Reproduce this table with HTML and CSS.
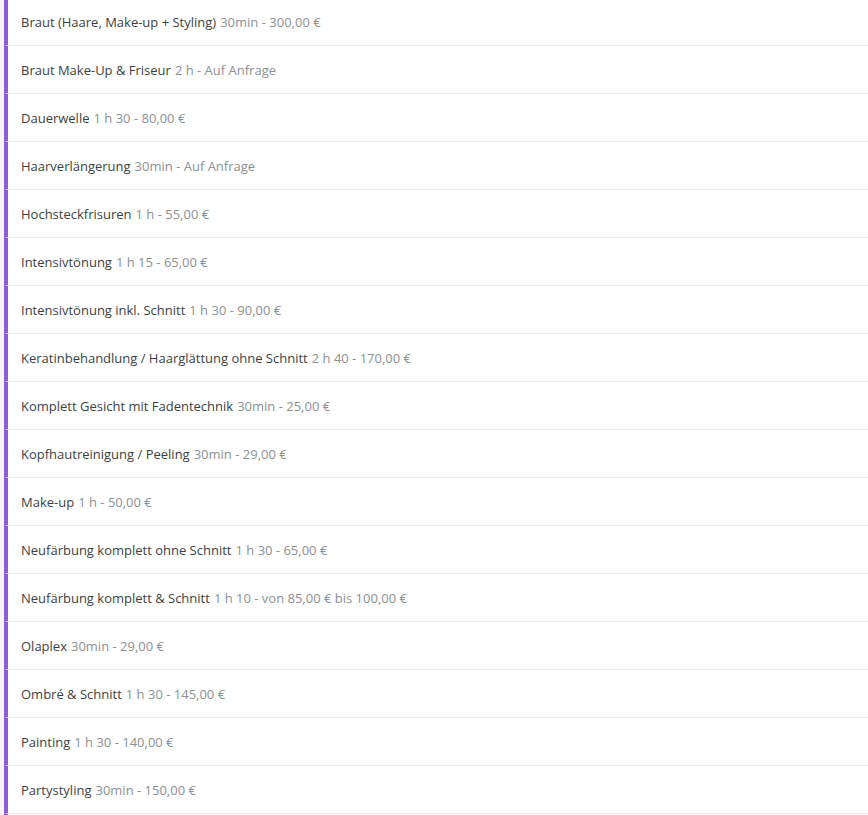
FILE: index.html
```html
<!DOCTYPE html>
<html lang="de">
  <head>
    <meta charset="UTF-8" />
    <meta name="viewport" content="width=device-width, initial-scale=1.0" />
    <title>Leistungen</title>
    <link rel="stylesheet" href="styles.css">
  </head>
  <body>
    <main class="services">
      <ul class="service-list">
        <li class="service">Braut (Haare, Make-up + Styling) <span class="meta">30min - 300,00 €</span></li>
        <li class="service">Braut Make-Up &amp; Friseur <span class="meta">2 h - Auf Anfrage</span></li>
        <li class="service">Dauerwelle <span class="meta">1 h 30 - 80,00 €</span></li>
        <li class="service">Haarverlängerung <span class="meta">30min - Auf Anfrage</span></li>
        <li class="service">Hochsteckfrisuren <span class="meta">1 h - 55,00 €</span></li>
        <li class="service">Intensivtönung <span class="meta">1 h 15 - 65,00 €</span></li>
        <li class="service">Intensivtönung inkl. Schnitt <span class="meta">1 h 30 - 90,00 €</span></li>
        <li class="service">Keratinbehandlung / Haarglättung ohne Schnitt <span class="meta">2 h 40 - 170,00 €</span></li>
        <li class="service">Komplett Gesicht mit Fadentechnik <span class="meta">30min - 25,00 €</span></li>
        <li class="service">Kopfhautreinigung / Peeling <span class="meta">30min - 29,00 €</span></li>
        <li class="service">Make-up <span class="meta">1 h - 50,00 €</span></li>
        <li class="service">Neufärbung komplett ohne Schnitt <span class="meta">1 h 30 - 65,00 €</span></li>
        <li class="service">Neufärbung komplett &amp; Schnitt <span class="meta">1 h 10 - von 85,00 € bis 100,00 €</span></li>
        <li class="service">Olaplex <span class="meta">30min - 29,00 €</span></li>
        <li class="service">Ombré &amp; Schnitt <span class="meta">1 h 30 - 145,00 €</span></li>
        <li class="service">Painting <span class="meta">1 h 30 - 140,00 €</span></li>
        <li class="service">Partystyling <span class="meta">30min - 150,00 €</span></li>
      </ul>
    </main>
  </body>
</html>
```

FILE: styles.css
```css
* {
  box-sizing: border-box;
  margin: 0;
  padding: 0;
}

html,
body {
  font-family: "Open Sans", sans-serif;
  background: #f4f4f4;
  height: 100%;
  overflow: hidden;
}

/* List area */
.services {
  padding-left: 4px;
  margin-top: -2px;
}

.service-list {
  list-style: none;
  background: white;
}

/* next row peeking in at the bottom edge */
.service-list::after {
  content: "";
  display: block;
  height: 48px;
  border-left: 4px solid #8a5cd6;
}

.service {
  display: flex;
  align-items: center;
  gap: 4px;
  height: 48px;
  padding-left: 13px;
  border-left: 4px solid #8a5cd6;
  border-bottom: 1px solid #e9e9e9;
  font-size: 13px;
  color: #3b3f42;
  white-space: nowrap;
}

.meta {
  color: #8c9093;
}
```
